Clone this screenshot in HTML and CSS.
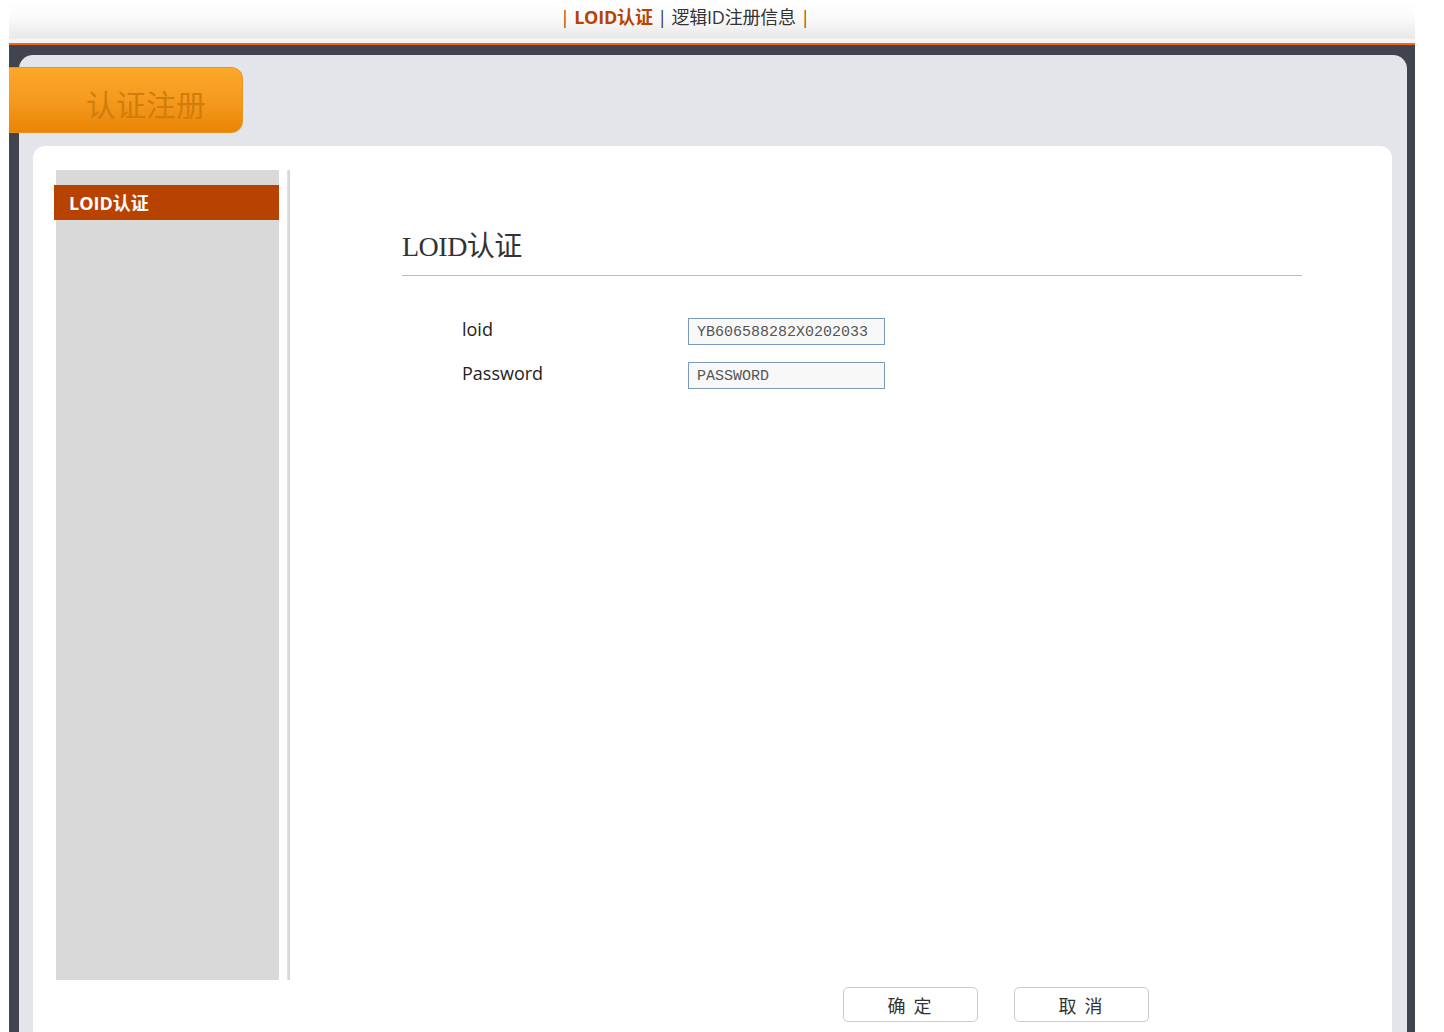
FILE: index.html
```html
<!DOCTYPE html>
<html lang="zh">
<head>
<meta charset="utf-8">
<title>LOID认证</title>
<link rel="stylesheet" href="styles.css">
</head>
<body>
<div class="frame">
  <div class="header">
    <span class="bar-o">|</span> <b class="cur">LOID认证</b> <span class="bar-d">|</span> <span class="link">逻辑ID注册信息</span> <span class="bar-o">|</span>
  </div>
  <div class="shell">
    <div class="panel">
      <div class="tab">认证注册</div>
      <div class="card">
        <div class="body">
          <div class="sidebar">
            <div class="nav-item">LOID认证</div>
          </div>
          <div class="sep"></div>
          <div class="main">
            <h1 class="title">LOID认证</h1>
            <div class="rule"></div>
            <div class="form">
              <div class="row">
                <label class="lbl">loid</label>
                <input class="inp" type="text" value="YB606588282X0202033">
              </div>
              <div class="row">
                <label class="lbl">Password</label>
                <input class="inp" type="text" value="PASSWORD">
              </div>
            </div>
          </div>
        </div>
        <div class="actions">
          <button class="btn">确 定</button>
          <button class="btn">取 消</button>
        </div>
      </div>
    </div>
  </div>
</div>
</body>
</html>
```

FILE: styles.css
```css
html, body {
  margin: 0;
  padding: 0;
  background: #ffffff;
  overflow: hidden;
}
body {
  font-family: "Open Sans", "Noto Sans CJK SC", sans-serif;
}
.frame {
  width: 1406px;
  margin-left: 9px;
  height: 1032px;
  display: flex;
  flex-direction: column;
}
.header {
  height: 43px;
  flex: none;
  background: linear-gradient(#ffffff 0%, #fbfbfb 40%, #e8e8e9 88%, #f6f6f6 92%, #f2f2f2 100%);
  border-bottom: 2px solid #ee6a12;
  box-sizing: content-box;
  text-align: center;
  padding-right: 54px;
  font-size: 18px;
  line-height: 35px;
  color: #333;
  white-space: nowrap;
  letter-spacing: -0.2px;
}
.header .bar-o { color: #b84300; }
.header .bar-d { color: #333; }
.header .cur {
  color: #b84300;
  font-weight: 700;
}
.header .link { color: #333; }
.shell {
  flex: 1;
  background: #41434f;
  padding: 10px 8px 0 10px;
  display: flex;
  flex-direction: column;
  min-height: 0;
}
.panel {
  flex: 1;
  background: #e4e5ea;
  border-radius: 14px 14px 0 0;
  padding-top: 12px;
  display: flex;
  flex-direction: column;
  min-height: 0;
}
.tab {
  width: 234px;
  height: 66px;
  margin-left: -10px;
  box-sizing: border-box;
  background: linear-gradient(#fca82a 0%, #f59a1e 50%, #ea8405 100%);
  border-radius: 0 12px 12px 0;
  border: 1px solid #e8951c;
  border-left: none;
  color: #cf7e0c;
  font-family: "Noto Sans CJK SC", sans-serif;
  font-size: 30px;
  line-height: 70px;
  padding-left: 77px;
  flex: none;
}
.card {
  margin: 13px 15px 0 14px;
  background: #ffffff;
  border-radius: 12px 12px 0 0;
  flex: 1;
  padding: 24px 0 0 23px;
  display: flex;
  flex-direction: column;
}
.body {
  display: flex;
  height: 810px;
  flex: none;
}
.sidebar {
  width: 223px;
  background: #d9d9d9;
  padding-top: 15px;
  box-sizing: border-box;
}
.nav-item {
  margin-left: -2px;
  height: 35px;
  background: #b84300;
  color: #ffffff;
  font-weight: 700;
  font-size: 18px;
  line-height: 37px;
  padding-left: 15px;
  letter-spacing: 0;
}
.sep {
  width: 3px;
  margin-left: 8px;
  background: linear-gradient(90deg, #e6e6e6, #cfcfcf);
}
.main {
  flex: 1;
  padding: 57px 0 0 112px;
}
.title {
  margin: 0;
  font-family: "Liberation Serif", "Noto Sans CJK SC", serif;
  font-weight: 400;
  font-size: 28px;
  line-height: 40px;
  color: #333;
  letter-spacing: -0.5px;
}
.rule {
  width: 900px;
  height: 1px;
  background: #bdbdbd;
  margin-top: 8px;
}
.form {
  padding-top: 42px;
  padding-left: 60px;
  display: flex;
  flex-direction: column;
  gap: 17px;
}
.row {
  display: flex;
  align-items: center;
}
.lbl {
  width: 226px;
  font-size: 18px;
  color: #222;
  margin-top: -5px;
}
.inp {
  width: 197px;
  height: 27px;
  box-sizing: border-box;
  border: 1px solid #7b9bbd;
  background: #f8f8f8;
  font-family: "Liberation Mono", monospace;
  font-size: 15px;
  color: #555;
  padding: 2px 8px 0 8px;
  outline: none;
  margin: 0;
}
.actions {
  display: flex;
  gap: 36px;
  margin-top: 7px;
  padding-left: 787px;
}
.btn {
  width: 135px;
  height: 35px;
  border: 1px solid #cccccc;
  border-radius: 5px;
  background: #ffffff;
  font-family: "Noto Sans CJK SC", sans-serif;
  font-size: 18px;
  color: #333;
  letter-spacing: 2px;
  padding: 0;
}
```
